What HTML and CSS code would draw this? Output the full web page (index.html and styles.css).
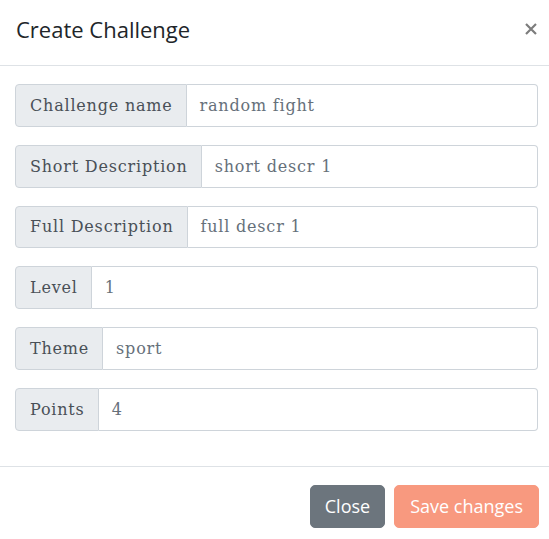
FILE: index.html
```html
<!DOCTYPE html>
<html>
<head>
<meta charset="utf-8">
<link rel="stylesheet" href="styles.css">
</head>
<body>
<div class="modal">
  <div class="modal-header">
    <h5 class="modal-title">Create Challenge</h5>
    <button class="close" aria-label="Close">
      <svg width="12" height="12" viewBox="0 0 12 12"><path d="M1 1 L11 11 M11 1 L1 11" stroke="#7d7d7d" stroke-width="2.2" stroke-linecap="butt"/></svg>
    </button>
  </div>
  <div class="modal-body">
    <div class="input-group"><span class="label">Challenge name</span><span class="control">random fight</span></div>
    <div class="input-group"><span class="label">Short Description</span><span class="control">short descr 1</span></div>
    <div class="input-group"><span class="label">Full Description</span><span class="control">full descr 1</span></div>
    <div class="input-group"><span class="label">Level</span><span class="control">1</span></div>
    <div class="input-group"><span class="label">Theme</span><span class="control">sport</span></div>
    <div class="input-group"><span class="label">Points</span><span class="control">4</span></div>
  </div>
  <div class="modal-footer">
    <button class="btn btn-secondary">Close</button>
    <button class="btn btn-primary">Save changes</button>
  </div>
</div>
</body>
</html>
```
FILE: styles.css
```css
html, body {
  margin: 0;
  padding: 0;
  background: #fff;
}
body {
  width: 549px;
  height: 539px;
  overflow: hidden;
}
.modal {
  background: #fff;
}
.modal-header {
  display: flex;
  align-items: flex-start;
  justify-content: space-between;
  padding: 14px 12px 21px 16px;
  border-bottom: 1px solid #dee2e6;
}
.modal-title {
  margin: 0;
  font-family: "Open Sans", sans-serif;
  font-weight: 400;
  font-size: 22px;
  line-height: 30px;
  color: #212529;
}
.close {
  border: 0;
  background: transparent;
  padding: 0;
  margin: 9px 0 0 0;
  width: 12px;
  height: 12px;
  display: flex;
}
.modal-body {
  padding: 18px 11px 17.5px 15px;
}
.input-group {
  display: flex;
  height: 42.75px;
  margin-bottom: 18px;
  font-family: "DejaVu Serif", serif;
  font-size: 16px;
  letter-spacing: 0.8px;
}
.label {
  display: flex;
  align-items: center;
  padding: 0 13px 0 14px;
  background: #e9ecef;
  border: 1px solid #ced4da;
  border-radius: 4px 0 0 4px;
  color: #495057;
  white-space: nowrap;
}
.control {
  flex: 1;
  display: flex;
  align-items: center;
  padding: 0 13px 0 13px;
  border: 1px solid #ced4da;
  border-left: 0;
  border-radius: 0 4px 4px 0;
  color: #66707a;
}
.modal-footer {
  display: flex;
  justify-content: flex-end;
  gap: 9px;
  padding: 18px 10px 20px;
  border-top: 1px solid #dee2e6;
}
.btn {
  font-family: "Open Sans", sans-serif;
  font-size: 18px;
  line-height: 27px;
  padding: 7px 15px;
  border: 1px solid transparent;
  border-radius: 5px;
  color: #fff;
}
.btn-secondary {
  background: #6c757d;
  border-color: #6c757d;
  padding: 7px 14px;
}
.btn-primary {
  background: #f8997f;
  border-color: #f8997f;
}
```
